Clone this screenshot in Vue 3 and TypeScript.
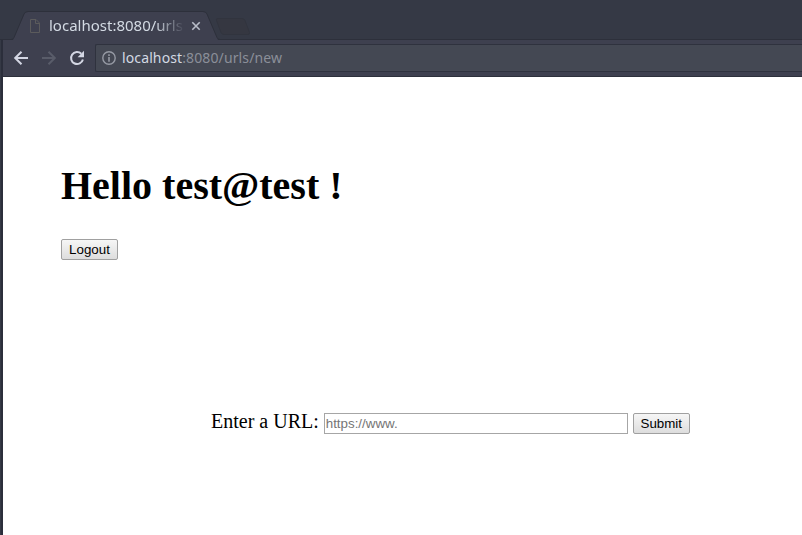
<script setup lang="ts">
import { ref } from 'vue'

const host = 'localhost'
const path = ':8080/urls/new'
const user = 'test@test'
const url = ref('')
</script>

<template>
  <div class="window">
    <header class="tabs">
      <svg class="tab-shapes" width="270" height="41" viewBox="0 0 270 41">
        <path d="M13 40L24.500 13.500Q25.500 12 28 12H203Q205.500 12 206.500 13.500L218 40V41H13Z" fill="#3e404f" />
        <path d="M0 39.500H11Q13 39.500 14 37.500L24 14Q25 11.500 28 11.500H203Q206 11.500 207 14L217 37.500Q218 39.500 220 39.500H270" fill="none" stroke="#2d303b" />
        <path d="M218 18.500H242Q244 18.500 245 20.500L249.500 32.500Q250 34.500 248 34.500H224Q222 34.500 221 32.500L216.500 20.500Q215.500 18.500 218 18.500Z" fill="#353741" stroke="#31343e" />
      </svg>
      <div class="tab">
        <svg class="page-icon" width="12" height="16" viewBox="0 0 12 16" fill="none" stroke="#5b5b5c">
          <path d="M1.500 1.500H7L10.500 5V14.500H1.500ZM6.500 1.500V5.500H10.500" />
        </svg>
        <span class="tab-title">localhost:8080/urls</span>
        <svg class="close" width="10" height="10" viewBox="0 0 10 10" stroke="#b9bdc9" stroke-width="1.600">
          <path d="M1.300 1.300L8.700 8.700M8.700 1.300L1.300 8.700" />
        </svg>
      </div>
    </header>
    <div class="frame">
      <nav class="toolbar">
        <svg class="nav-icon" width="16" height="16" viewBox="0 0 16 16" fill="none" stroke="#d3d6e3" stroke-width="2">
          <path d="M15 8H2.500M8.500 1.700L2.200 8L8.500 14.300" />
        </svg>
        <svg class="nav-icon" width="16" height="16" viewBox="0 0 16 16" fill="none" stroke="#595c69" stroke-width="2">
          <path d="M1 8H13.500M7.500 1.700L13.800 8L7.500 14.300" />
        </svg>
        <svg class="nav-icon" width="16" height="16" viewBox="0 0 16 16">
          <path d="M13.900 9.500A6 6 0 1 1 12.300 3.800" fill="none" stroke="#d3d6e3" stroke-width="2" />
          <path d="M15 .8V7.200H8.600Z" fill="#d3d6e3" />
        </svg>
        <div class="address">
          <svg class="info" width="14" height="14" viewBox="0 0 14 14">
            <circle cx="7" cy="7" r="6.200" fill="none" stroke="#969aa4" stroke-width="1.400" />
            <path d="M6.200 3.300H7.800V4.900H6.200ZM6.200 6.100H7.800V10.700H6.200Z" fill="#969aa4" />
          </svg>
          <span class="url"><span class="host">{{ host }}</span>{{ path }}</span>
        </div>
      </nav>
      <main class="page">
        <h1>Hello {{ user }} !</h1>
        <button type="button" class="btn">Logout</button>
        <form class="url-form" @submit.prevent>
          <label for="url">Enter a URL:</label>
          <input id="url" v-model="url" type="text" placeholder="https://www." />
          <button type="submit" class="btn">Submit</button>
        </form>
      </main>
    </div>
  </div>
</template>

<style>
body {
  margin: 0;
  overflow: hidden;
}
</style>

<style scoped>
.window {
  display: flex;
  flex-direction: column;
  height: 535px;
  box-sizing: border-box;
  background: #353945;
}
.tabs {
  position: relative;
  height: 40px;
  flex: none;
  box-sizing: border-box;
  background: linear-gradient(to top, #2d303b 1px, transparent 1px);
}
.tab-shapes {
  position: absolute;
  left: 0;
  top: 0;
}
.tab {
  position: relative;
  display: flex;
  align-items: center;
  height: 28px;
  margin-left: 29px;
  padding-top: 12px;
}
.page-icon {
  margin-right: 8px;
}
.tab-title {
  width: 134px;
  margin-top: -2px;
  overflow: hidden;
  white-space: nowrap;
  font: 15px/20px "Noto Sans", sans-serif;
  color: #d3dae3;
  -webkit-mask-image: linear-gradient(to right, #000 105px, transparent 136px);
  mask-image: linear-gradient(to right, #000 105px, transparent 136px);
}
.close {
  margin-left: 8px;
}
.frame {
  flex: 1;
  display: flex;
  flex-direction: column;
  padding-left: 3px;
  background: linear-gradient(to right, #353945 1px, #2b2e3b 1px);
}
.toolbar {
  display: flex;
  align-items: center;
  height: 37px;
  flex: none;
  box-sizing: border-box;
  padding-left: 10px;
  background: #3e404f;
  border-bottom: 1px solid #2d303b;
}
.nav-icon {
  margin-right: 12px;
}
.address {
  flex: 1;
  display: flex;
  align-items: center;
  height: 28px;
  box-sizing: border-box;
  margin-left: -2px;
  padding-left: 6px;
  background: #444853;
  border: 1px solid #2f323e;
  border-right: 0;
  border-radius: 2px 0 0 2px;
}
.url {
  margin-left: 6px;
  font: 14px/20px "Noto Sans", sans-serif;
  letter-spacing: 0.12px;
  color: #8b8f99;
}
.host {
  color: #d3dae3;
}
.page {
  flex: 1;
  padding: 86px 0 0 58px;
  background: #fff;
  color: #000;
  font: 20px/23px "Liberation Serif", serif;
}
h1 {
  margin: 0 0 30px;
  font-size: 40px;
  line-height: 46px;
}
.btn {
  display: block;
  width: 57px;
  height: 21px;
  box-sizing: border-box;
  padding: 0;
  border: 1px solid #a0a0a0;
  border-radius: 2px;
  background: linear-gradient(#f6f6f6, #dddddd);
  color: #000;
  font: 13.333px/17px "Liberation Sans", Arial, sans-serif;
}
.url-form {
  display: flex;
  align-items: center;
  margin: 153px 0 0 150px;
}
.url-form label {
  margin: -5px 5px 0 0;
}
.url-form input {
  width: 304px;
  height: 21px;
  box-sizing: border-box;
  margin-right: 5px;
  padding: 1px;
  border: 1px solid #a6a6a6;
  border-radius: 0;
  background: #fff;
  outline: none;
  font: 13.333px "Liberation Sans", Arial, sans-serif;
}
.url-form input::placeholder {
  color: #757575;
}
</style>
